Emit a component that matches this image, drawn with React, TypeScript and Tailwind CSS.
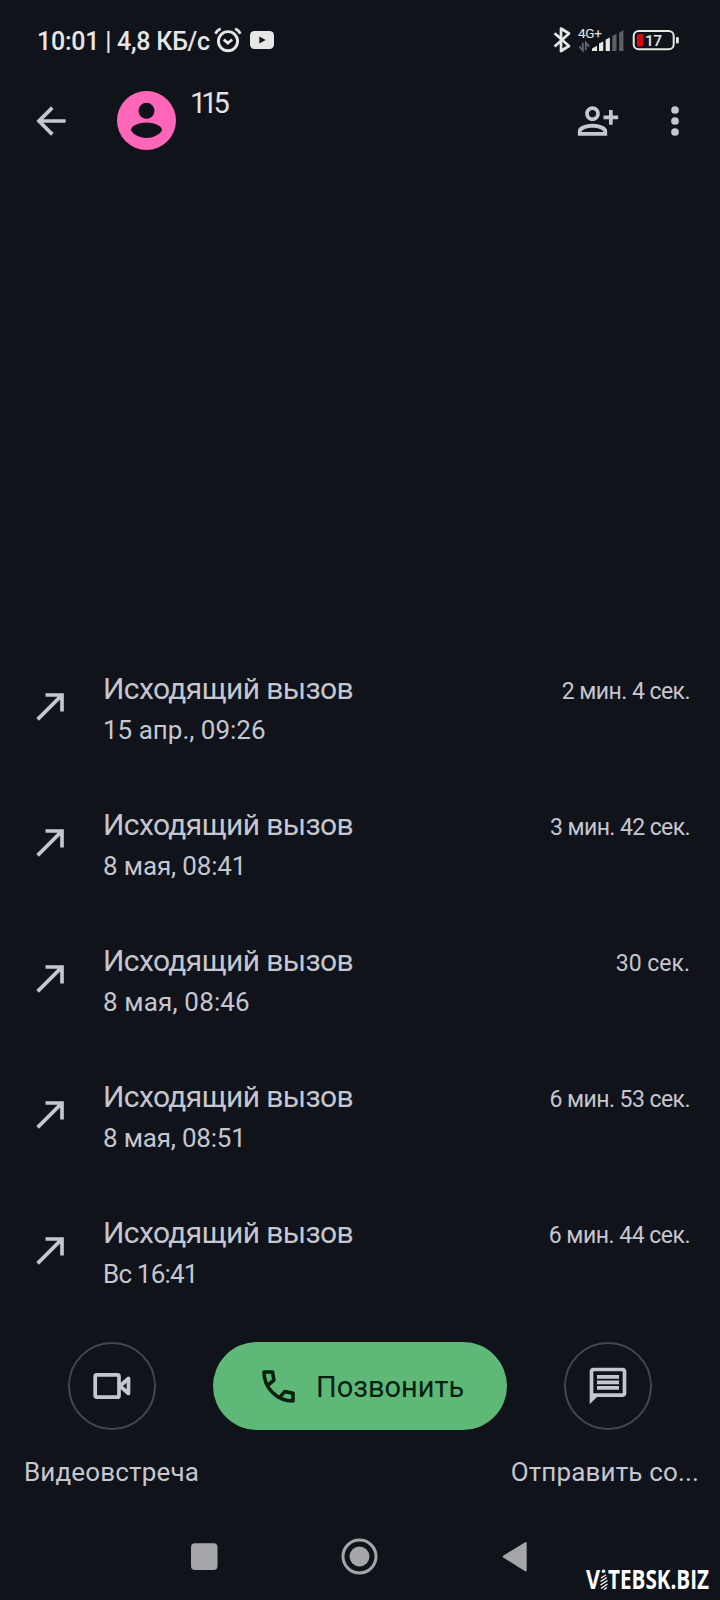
import type { ReactNode } from 'react';

type Call = { date: string; duration: string; dateClass: string; durationClass: string };

const calls: Call[] = [
  { date: '15 апр., 09:26', duration: '2 мин. 4 сек.', dateClass: '', durationClass: 'tracking-[-0.55px]' },
  { date: '8 мая, 08:41', duration: '3 мин. 42 сек.', dateClass: 'tracking-[-0.15px]', durationClass: 'tracking-[-0.6px]' },
  { date: '8 мая, 08:46', duration: '30 сек.', dateClass: 'tracking-[0.15px]', durationClass: '' },
  { date: '8 мая, 08:51', duration: '6 мин. 53 сек.', dateClass: 'tracking-[-0.2px]', durationClass: 'tracking-[-0.55px]' },
  { date: 'Вс 16:41', duration: '6 мин. 44 сек.', dateClass: 'tracking-[-0.8px]', durationClass: 'tracking-[-0.5px]' },
];

function Icon({ children, className = '' }: { children: ReactNode; className?: string }) {
  return (
    <svg viewBox="0 0 24 24" fill="currentColor" className={`size-11 shrink-0 ${className}`}>
      {children}
    </svg>
  );
}

function StatusBar() {
  return (
    <div className="flex h-20 shrink-0 items-start pl-[37px] text-[#e6e6e6]">
      <span className="mt-[26px] w-[176px] text-[25px] leading-8 font-medium tracking-[-0.25px] whitespace-nowrap">
        10:01 | 4,8 КБ/с
      </span>
      <svg viewBox="213 24 64 32" className="mt-6 h-8 w-16" fill="none" stroke="currentColor">
        <circle cx="228" cy="41.2" r="9.6" strokeWidth="2.9" />
        <path d="M223.800 39.500l4 3.600 4.400-3.600" strokeWidth="2.7" />
        <path d="M215.500 33.700c1-2.400 2.600-4 5.200-5M240.300 33.700c-1-2.400-2.600-4-5.200-5" strokeWidth="2.7" />
        <rect x="250" y="31" width="24" height="18" rx="4.5" fill="currentColor" stroke="none" />
        <path d="M259.300 36.600v7l6.400-3.500z" fill="#10131a" stroke="none" />
      </svg>
      <svg viewBox="550 22 136 36" className="mt-[22px] ml-auto mr-[34px] h-9 w-[136px]" fill="currentColor">
        <path
          d="M554.600 33.300L569 46l-8 5V28.500l8 5L554.600 46.500"
          fill="none"
          stroke="currentColor"
          strokeWidth="2.7"
          strokeLinejoin="round"
        />
        <text x="578" y="38" fontSize="13.5" textLength="24" className="font-normal">
          4G+
        </text>
        <path d="M592 51v-2.500l5-2.700V51zM599 51v-7.500l4.200-2V51zM605.700 51V39.500l4.200-2V51z" />
        <path d="M612.300 51V36l4.200-2.300V51zM619.200 51V32.500l4.200-2.300V51z" fill="#606167" />
        <path d="M582.800 42.800v7.500l-3.500-3.800M585.800 50.300v-7.500l3.500 3.800" fill="none" stroke="#606167" strokeWidth="1.9" />
        <rect x="633.7" y="31" width="40" height="18.3" rx="5" fill="none" stroke="currentColor" strokeWidth="2" />
        <rect x="637" y="34" width="6.5" height="12.5" rx="1.5" fill="#d60b0b" />
        <rect x="676" y="37" width="2.8" height="6.5" rx="1" />
        <text x="645" y="46" fontSize="15.5" textLength="17" className="font-medium">
          17
        </text>
      </svg>
    </div>
  );
}

function Header() {
  return (
    <header className="flex h-20 shrink-0 items-center pb-px pl-[29px] pr-[23px] text-[#c5c6d0]">
      <Icon className="mt-0.5">
        <path d="M20 11H7.830l5.590-5.590L12 4l-8 8 8 8 1.410-1.410L7.830 13H20z" />
      </Icon>
      <svg viewBox="0 0 59 59" className="mt-0.5 ml-11 size-[59px]">
        <circle cx="29.5" cy="29.5" r="29.5" fill="#ff66b8" />
        <circle cx="29.5" cy="19.8" r="8" fill="#10131a" />
        <path d="M14 39c0-3.500 6.500-7.500 15.500-7.500S45 35.500 45 39c0 2-6.500 8-15.500 8S14 41 14 39z" fill="#10131a" />
      </svg>
      <span className="mb-[34px] ml-3.5 text-[29px] leading-10 tracking-[-5px] text-[#e2e2e9]">
        11<span className="ml-px">5</span>
      </span>
      <Icon className="mt-0.5 mr-[33px] ml-auto">
        <path d="M13 8c0-2.210-1.790-4-4-4S5 5.790 5 8s1.790 4 4 4 4-1.790 4-4zm-2 0c0 1.100-.9 2-2 2s-2-.9-2-2 .9-2 2-2 2 .9 2 2zM1 17.500V20h16v-2.500c0-2.400-4-4-8-4s-8 1.600-8 4zm2 .5c0-1.200 3-2.300 6-2.300s6 1.100 6 2.300H3zM20 14v-3h3V9h-3V6h-2v3h-3v2h3v3z" />
      </Icon>
      <Icon className="mt-0.5">
        <circle cx="12" cy="6" r="2.1" />
        <circle cx="12" cy="12" r="2.1" />
        <circle cx="12" cy="18" r="2.1" />
      </Icon>
    </header>
  );
}

function CallRow({ call }: { call: Call }) {
  return (
    <li className="flex h-[136px] items-start pt-7 pr-[30px] pl-[29px]">
      <Icon className="mt-[15px]">
        <path d="M9 5v2h6.590L4 18.590 5.410 20 17 8.410V15h2V5z" />
      </Icon>
      <div className="ml-[30px] flex flex-col">
        <span className="text-[30px] leading-10 tracking-[-0.6px] whitespace-nowrap">Исходящий вызов</span>
        <span className={`mt-px text-[26px] leading-10 whitespace-nowrap ${call.dateClass}`}>{call.date}</span>
      </div>
      <span className={`mt-[3px] ml-auto text-[23px] leading-10 whitespace-nowrap ${call.durationClass}`}>
        {call.duration}
      </span>
    </li>
  );
}

function Actions() {
  return (
    <div className="shrink-0">
      <div className="flex h-[88px] justify-between px-[68px]">
        <button className="flex size-[88px] items-center justify-center rounded-full border-2 border-[#44464f]">
          <svg viewBox="0 0 40 28" className="h-7 w-10" fill="none" stroke="currentColor" strokeWidth="3.7">
            <rect x="3.2" y="2.8" width="23.8" height="22.4" rx="1.5" />
            <path d="M28 14l8.500-7.500v15z" strokeLinejoin="round" />
          </svg>
        </button>
        <button className="flex h-[88px] w-[294px] items-center rounded-full bg-[#5eb978] pl-[49px] text-[#06210f]">
          <svg viewBox="0 0 33 33" className="size-[33px]" fill="none" stroke="currentColor" strokeWidth="3.6">
            <path d="M5.500 15.500l6.400-5.300L10.500 2H2c0 16 13 29 29 29v-7.700l-8.200-1.700-5.500 6" strokeLinejoin="round" />
          </svg>
          <span className="mt-px ml-[21px] text-[29px] leading-10">Позвонить</span>
        </button>
        <button className="flex size-[88px] items-center justify-center rounded-full border-2 border-[#44464f]">
          <Icon>
            <path d="M20 2H4c-1.100 0-2 .9-2 2v18l4-4h14c1.100 0 2-.9 2-2V4c0-1.100-.9-2-2-2zm0 14H4V4h16zM6 12h12v2H6zm0-3h12v2H6zm0-3h12v2H6z" />
          </Icon>
        </button>
      </div>
      <div className="mt-[22px] mb-px flex justify-between pr-[21px] pl-6 text-[26px] leading-10 tracking-[0.15px]">
        <span>Видеовстреча</span>
        <span>Отправить со...</span>
      </div>
    </div>
  );
}

function NavigationBar() {
  return (
    <nav className="relative h-[107px] shrink-0 text-[#a5a6a9]">
      <div className="flex justify-center pt-[43px] pr-px">
        <svg viewBox="191 1536 337 40" className="h-10 w-[337px]" fill="currentColor">
          <rect x="191" y="1543.2" width="26.5" height="26.8" rx="4" />
          <circle cx="359.5" cy="1556.5" r="16.5" fill="none" stroke="currentColor" strokeWidth="3" />
          <circle cx="359.5" cy="1556.5" r="10" />
          <path d="M503.700 1556.700l22-13.700v27.500z" stroke="currentColor" strokeWidth="2" strokeLinejoin="round" />
        </svg>
      </div>
      <svg
        viewBox="580 1550 140 50"
        className="absolute right-0 bottom-0 h-[50px] w-[140px] font-['Open_Sans','Noto_Sans',sans-serif] font-bold"
        fill="#fff"
        fontSize="27.5"
      >
        <text transform="translate(586 1589) scale(.7 1)" textLength="20" lengthAdjust="spacingAndGlyphs">
          V
        </text>
        <text transform="translate(608 1589) scale(.7 1)" textLength="144.3" lengthAdjust="spacingAndGlyphs">
          TEBSK.BIZ
        </text>
        <circle cx="603.5" cy="1571.2" r="1.8" />
        <path d="M601 1578l5-3M600.500 1581.500l6.500-4M600.500 1585l7-4.500M601 1588.500l6.500-4.500M604 1589.500l3-2" fill="none" stroke="#fff" strokeWidth="1.3" />
      </svg>
    </nav>
  );
}

export default function App() {
  return (
    <main className="flex h-[1600px] w-[720px] flex-col overflow-hidden bg-[#10131a] font-['Roboto','Noto_Sans',sans-serif] text-[#c5c6d0]">
      <StatusBar />
      <Header />
      <ul className="mb-[21px] flex flex-1 flex-col justify-end">
        {calls.map((call) => (
          <CallRow key={call.date} call={call} />
        ))}
      </ul>
      <Actions />
      <NavigationBar />
    </main>
  );
}
